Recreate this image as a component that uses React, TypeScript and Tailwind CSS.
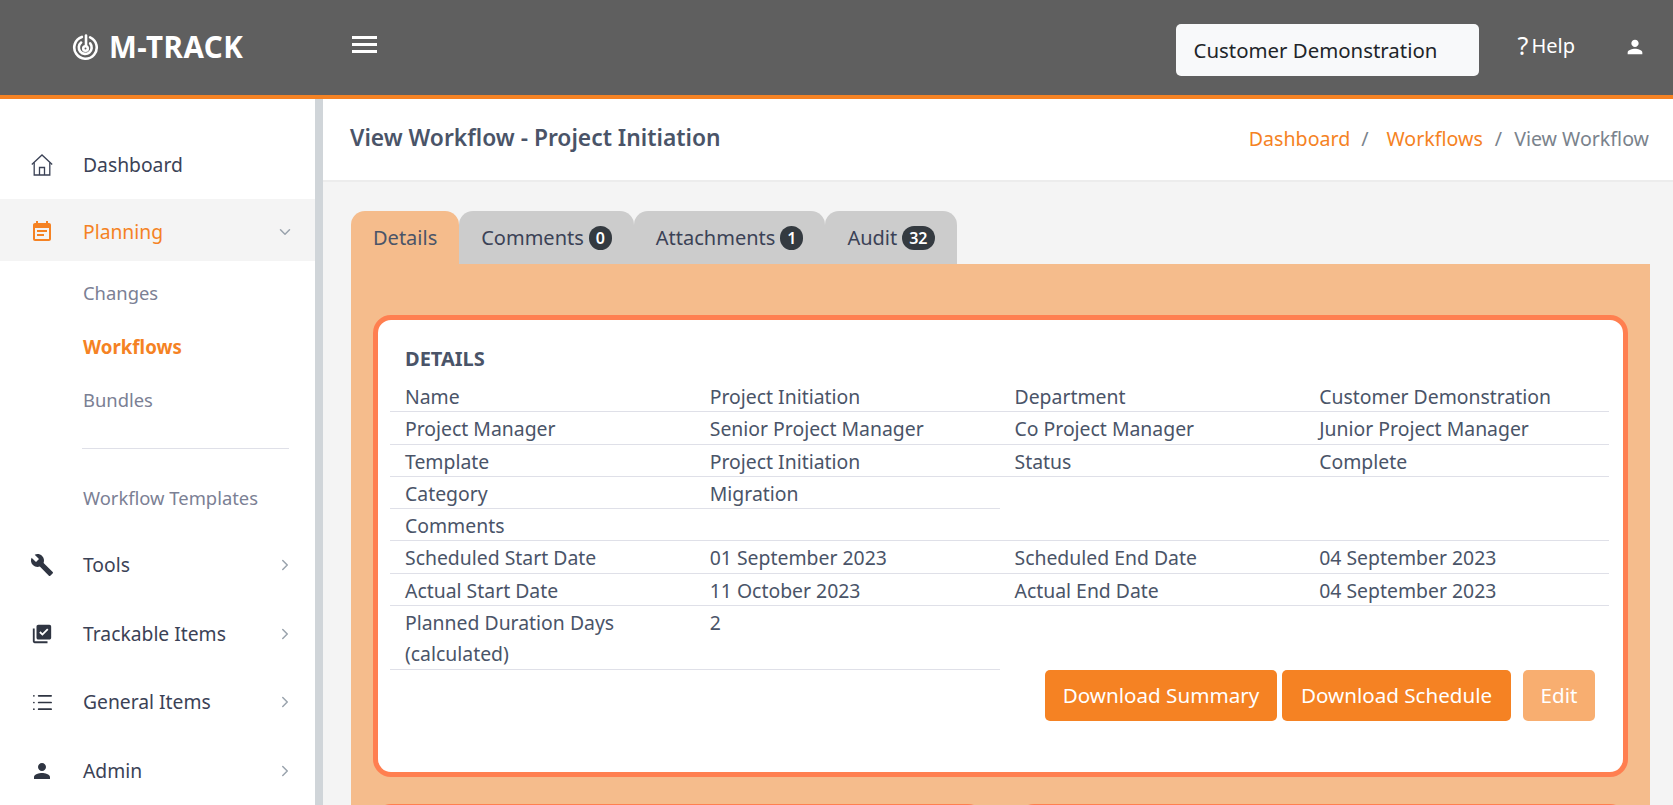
import { MdEventNote, MdBuild, MdLibraryAddCheck, MdPerson } from "react-icons/md";
import { ChevronRight, ChevronDown, List } from "lucide-react";
import type { ReactNode } from "react";

const font = "font-['Noto_Sans','Open_Sans',sans-serif]";

function Logo() {
  return (
    <svg width="27" height="27" viewBox="0 0 26 26" fill="none" stroke="white" strokeWidth="2.5" strokeLinecap="round">
      <path d="M9.5 2.8A10.8 10.8 0 1 0 17.5 3.2" />
      <path d="M8.8 8.2A6.2 6.2 0 1 0 17.5 9" />
      <path d="M13.5 1.5V11" />
      <circle cx="13" cy="14" r="2.2" />
    </svg>
  );
}

function HouseIcon() {
  return (
    <svg width="22" height="22" viewBox="0 0 22 22" fill="none" stroke="#3b4256" strokeWidth="1.3">
      <path d="M0.8 10.5L11 1L21.2 10.5" />
      <path d="M3.2 8.6V21H18.8V8.6" />
      <path d="M8.5 21V13.5H13.5V21" />
    </svg>
  );
}

function NavRow({ icon, label, open, active }: { icon: ReactNode; label: string; open?: boolean; active?: boolean }) {
  return (
    <div className={`flex items-center h-[62px] pl-[30px] pr-[21px] ${active ? "bg-[#f4f4f4] text-[#f58223] pt-[4px]" : "text-[#3b4256]"}`}>
      <span className="w-[24px] flex justify-center">{icon}</span>
      <span className="ml-[29px] flex-1 text-[19.3px]">{label}</span>
      {open === undefined ? null : open ? (
        <ChevronDown size={18} className="text-[#9aa3ad]" />
      ) : (
        <ChevronRight size={18} className="text-[#9aa3ad]" />
      )}
    </div>
  );
}

function Cell({ label, value }: { label: string; value: string }) {
  return (
    <div className="grid grid-cols-2 border-b border-[#dfe0e8] text-[19.4px] leading-[31.3px] text-[#4a5468]">
      <div className="translate-y-[1px] px-[15px]">{label}</div>
      <div className="translate-y-[1px] px-[15px]">{value}</div>
    </div>
  );
}

function Badge({ children, wide }: { children: ReactNode; wide?: boolean }) {
  return (
    <span className={`ml-[5px] inline-flex h-[24px] min-w-[23px] items-center justify-center rounded-full bg-[#343a40] text-[16px] font-semibold text-white ${wide ? "px-[7px]" : "px-[6px]"}`}>
      {children}
    </span>
  );
}

function Tab({ children, active }: { children: ReactNode; active?: boolean }) {
  return (
    <div className={`flex h-[53px] items-center rounded-t-[14px] px-[22px] text-[20px] ${active ? "bg-[#f5bc8c] text-[#4a5468]" : "bg-[#cccccc] text-[#3b4256]"}`}>
      {children}
    </div>
  );
}

export default function App() {
  return (
    <div className={`flex h-screen flex-col overflow-hidden bg-white ${font}`}>
      <header className="flex h-[99px] shrink-0 items-center border-b-4 border-[#f58223] bg-[#5f5f5f] pr-[27px] text-white">
        <div className="flex w-[352px] items-center pl-[72px]">
          <Logo />
          <span className="ml-[10px] text-[29.5px] font-bold tracking-[0.5px]">M-TRACK</span>
        </div>
        <div className="flex flex-col gap-[4px] -mt-[6px]">
          <span className="block h-[3px] w-[25px] bg-white" />
          <span className="block h-[3px] w-[25px] bg-white" />
          <span className="block h-[3px] w-[25px] bg-white" />
        </div>
        <div className="ml-auto mt-[5px] flex h-[52px] w-[303px] items-center rounded-[5px] bg-[#f8f9fa] pl-[18px] text-[20.4px] text-[#212529]">
          Customer Demonstration
        </div>
        <div className="ml-[39px] flex items-center text-[20px] -mt-[4px]">
          <span className="text-[25px] mr-[3px]">?</span>Help
        </div>
        <MdPerson size={22} className="ml-[49px] -mt-[2px]" />
      </header>
      <div className="flex min-h-0 flex-1">
        <aside className="w-[323px] shrink-0 border-r-[8px] border-[#d0d5d9] pt-[35px]">
          <NavRow icon={<HouseIcon />} label="Dashboard" />
          <div className="mt-[3px]">
            <NavRow icon={<MdEventNote size={24} className="text-[#f58223]" />} label="Planning" open active />
          </div>
          <div className="pl-[83px] text-[18.4px] text-[#7b8094]">
            <div className="flex h-[60px] items-center mt-[2px]">Changes</div>
            <div className="flex h-[48px] items-center font-bold text-[18.7px] text-[#f58223]">Workflows</div>
            <div className="flex h-[58px] items-center">Bundles</div>
          </div>
          <div className="ml-[82px] mr-[26px] mt-[19px] border-t border-[#dfe0e8]" />
          <div className="flex h-[85px] items-center pl-[83px] pt-[13px] text-[18.4px] text-[#7b8094]">Workflow Templates</div>
          <NavRow icon={<MdBuild size={24} className="text-[#2f3542]" />} label="Tools" open={false} />
          <div className="mt-[7px]">
            <NavRow icon={<MdLibraryAddCheck size={22} className="text-[#2f3542]" />} label="Trackable Items" open={false} />
          </div>
          <div className="mt-[6px]">
            <NavRow icon={<List size={23} strokeWidth={1.8} className="text-[#2f3542]" />} label="General Items" open={false} />
          </div>
          <div className="mt-[7px]">
            <NavRow icon={<MdPerson size={24} className="text-[#2f3542]" />} label="Admin" open={false} />
          </div>
        </aside>
        <main className="min-w-0 flex-1 bg-[#f4f4f4]">
          <div className="flex h-[83px] items-center justify-between border-b-2 border-[#ececec] bg-white pb-[2px] pl-[27px] pr-[24px]">
            <h1 className="text-[22.8px] font-semibold text-[#4a5468]">View Workflow - Project Initiation</h1>
            <div className="flex text-[19.6px] text-[#7a838c]">
              <span className="text-[#f58223]">Dashboard</span>
              <span className="mx-[11px]">/</span>
              <span className="text-[#f58223] ml-[7px]">Workflows</span>
              <span className="mx-[12px]">/</span>
              <span>View Workflow</span>
            </div>
          </div>
          <div className="pl-[28px] pr-[23px] pt-[29px]">
            <div className="flex">
              <Tab active>Details</Tab>
              <Tab>Comments<Badge>0</Badge></Tab>
              <Tab>Attachments<Badge>1</Badge></Tab>
              <Tab>Audit<Badge wide>32</Badge></Tab>
            </div>
            <div className="bg-[#f5bc8c] px-[22px] pt-[51px] pb-[28px]">
              <div className="h-[462px] rounded-[18px] border-[5px] border-[#ff7f50] bg-white pl-[12px] pr-[14px] pt-[24px]">
                <div className="mb-[6px] px-[15px] text-[20px] leading-[30px] font-bold text-[#4a5468]">DETAILS</div>
                <div className="grid grid-cols-2">
                  <Cell label="Name" value="Project Initiation" />
                  <Cell label="Department" value="Customer Demonstration" />
                  <Cell label="Project Manager" value="Senior Project Manager" />
                  <Cell label="Co Project Manager" value="Junior Project Manager" />
                  <Cell label="Template" value="Project Initiation" />
                  <Cell label="Status" value="Complete" />
                  <Cell label="Category" value="Migration" />
                  <div />
                  <Cell label="Comments" value="" />
                  <div className="border-b border-[#dfe0e8]" />
                  <Cell label="Scheduled Start Date" value="01 September 2023" />
                  <Cell label="Scheduled End Date" value="04 September 2023" />
                  <Cell label="Actual Start Date" value="11 October 2023" />
                  <Cell label="Actual End Date" value="04 September 2023" />
                  <Cell label="Planned Duration Days (calculated)" value="2" />
                </div>
                <div className="flex justify-end pr-[14px]">
                  <button className="h-[51px] w-[232px] rounded-[5px] bg-[#f58223] text-[20.6px] text-white">Download Summary</button>
                  <button className="ml-[5px] h-[51px] w-[229px] rounded-[5px] bg-[#f58223] text-[20.6px] text-white">Download Schedule</button>
                  <button className="ml-[12px] h-[51px] w-[72px] rounded-[5px] bg-[#f58223]/65 text-[20.6px] text-white">Edit</button>
                </div>
              </div>
              <div className="mt-[27px] grid grid-cols-2 gap-[30px]">
                <div className="h-[60px] rounded-t-[18px] border-t-[5px] border-[#ff7f50] bg-white" />
                <div className="h-[60px] rounded-t-[18px] border-t-[5px] border-[#ff7f50] bg-white" />
              </div>
            </div>
          </div>
        </main>
      </div>
    </div>
  );
}
